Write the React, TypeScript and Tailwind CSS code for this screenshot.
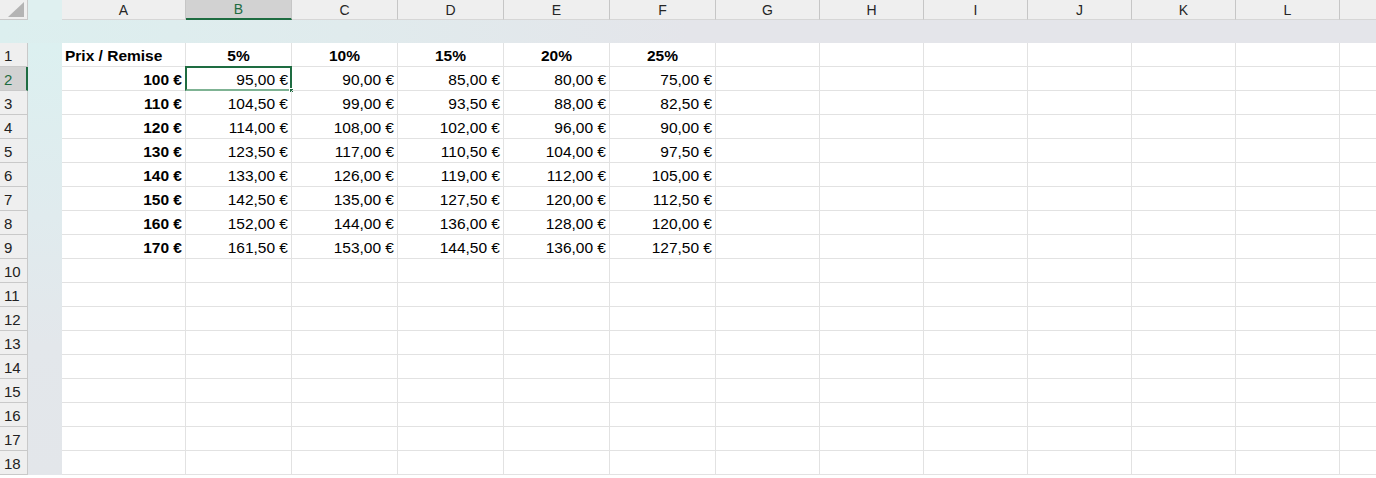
import React from "react";

const colLetters = ["A", "B", "C", "D", "E", "F", "G", "H", "I", "J", "K", "L", ""];
const colWidths = [124, 106, 106, 106, 106, 106, 104, 104, 104, 104, 104, 104, 104];

const prices = [100, 110, 120, 130, 140, 150, 160, 170];
const discounts = [5, 10, 15, 20, 25];

const fmt = (n: number) => n.toFixed(2).replace(".", ",") + " €";

const TOTAL_ROWS = 18;

const Cell: React.FC<{
  width: number;
  align?: "left" | "right" | "center";
  bold?: boolean;
  selected?: boolean;
  children?: React.ReactNode;
}> = ({ width, align = "left", bold, selected, children }) => {
  const alignCls =
    align === "right" ? "justify-end pr-[3px]" : align === "center" ? "justify-center" : "justify-start pl-[3px]";
  return (
    <div
      style={{ width }}
      className={`relative flex shrink-0 items-center pt-[3px] h-full border-r border-b border-[#e2e2e2] whitespace-nowrap ${alignCls} ${
        bold ? "font-bold" : ""
      }`}
    >
      {children}
      {selected && (
        <>
          <div className="absolute -left-px -top-px right-[-1px] bottom-[-1px] border-2 border-[#1e6c41] border-b-[#7fb394]" />
          <div className="absolute right-[-3px] bottom-[-3px] w-[5px] h-[5px] bg-[#1e6c41] border border-white" />
        </>
      )}
    </div>
  );
};

const App: React.FC = () => {
  const rows = Array.from({ length: TOTAL_ROWS }, (_, i) => i + 1);

  const cellContent = (row: number, col: number) => {
    if (row === 1) {
      if (col === 0) return { text: "Prix / Remise", align: "left" as const, bold: true };
      if (col <= 5) return { text: `${discounts[col - 1]}%`, align: "center" as const, bold: true };
      return null;
    }
    const p = prices[row - 2];
    if (p === undefined) return null;
    if (col === 0) return { text: `${p} €`, align: "right" as const, bold: true };
    if (col <= 5) return { text: fmt(p * (1 - discounts[col - 1] / 100)), align: "right" as const, bold: false };
    return null;
  };

  return (
    <div className="w-[1376px] h-[478px] overflow-hidden bg-white text-black font-['Liberation_Sans',Arial,sans-serif] text-[15.5px]">
      {/* Column headers */}
      <div className="flex h-[20px]">
        <div className="w-[28px] shrink-0 bg-[#efefef] border-r border-b border-[#c9c9c9] relative">
          <svg className="absolute left-0 top-0" width="28" height="20" viewBox="0 0 28 20">
            <polygon points="8,17 24,17 24,2" fill="#b4b4b4" />
          </svg>
        </div>
        <div className="w-[34px] shrink-0 bg-[#dff0f0]" />
        {colLetters.map((l, i) => (
          <div
            key={i}
            style={{ width: colWidths[i] }}
            className={`shrink-0 flex items-center justify-center pt-[1px] text-[14px] border-r border-[#c6c6c6] ${
              l === "B"
                ? "bg-[#d2d2d2] text-[#1e6c41] border-b-2 border-b-[#1e6c41]"
                : "bg-[#efefef] text-[#262626] border-b border-b-[#d6d6d6]"
            }`}
          >
            {l}
          </div>
        ))}
      </div>

      {/* Frozen gap band */}
      <div className="h-[23px] bg-[linear-gradient(to_right,#dcefef,#e0ebed_25%,#e4e5ea_50%,#e4e5ea)]" />

      {/* Body */}
      <div className="flex">
        <div className="w-[28px] shrink-0 flex flex-col">
          {rows.map((r) => (
            <div
              key={r}
              className={`h-[24px] shrink-0 flex items-center pt-[3px] pl-[4px] border-b border-[#c9c9c9] text-[15px] ${
                r === 2
                  ? "bg-[#d2d2d2] text-[#1e6c41] border-r-2 border-r-[#1e6c41]"
                  : "bg-[#efefef] text-[#222] border-r border-r-[#c9c9c9]"
              }`}
            >
              {r}
            </div>
          ))}
        </div>
        <div className="w-[34px] shrink-0 bg-[linear-gradient(to_bottom,#dcf0f0,#e0ebee_40%,#e3e7eb_70%,#e3e6ea)]" />
        <div className="flex flex-col">
          {rows.map((r) => (
            <div key={r} className="flex h-[24px] shrink-0">
              {colLetters.map((_, c) => {
                const content = cellContent(r, c);
                return (
                  <Cell
                    key={c}
                    width={colWidths[c]}
                    align={content?.align}
                    bold={content?.bold}
                    selected={r === 2 && c === 1}
                  >
                    {content?.text}
                  </Cell>
                );
              })}
            </div>
          ))}
        </div>
      </div>
    </div>
  );
};

export default App;
